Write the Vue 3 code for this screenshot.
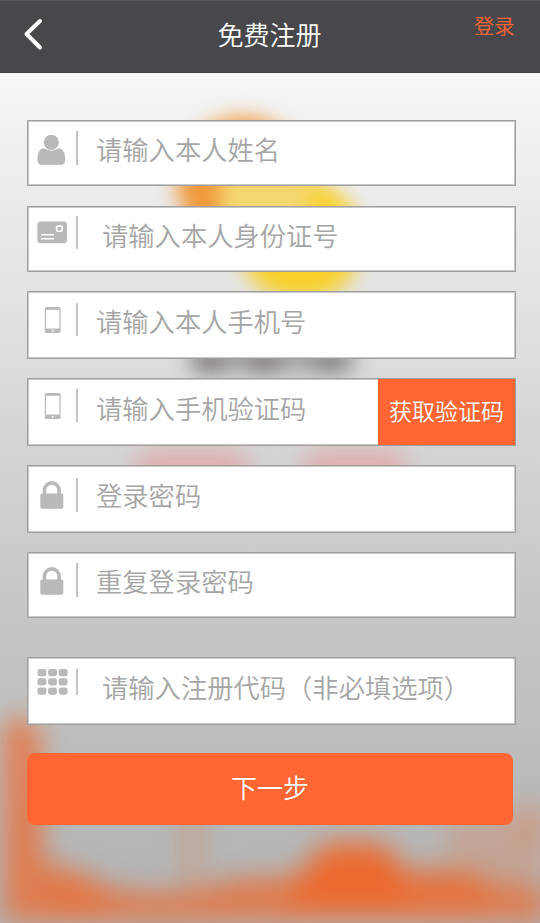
<script setup>
const fields = [
  { id: 'name', icon: 'user', hint: '请输入本人姓名' },
  { id: 'identity', icon: 'card', hint: '请输入本人身份证号' },
  { id: 'mobile', icon: 'phone', hint: '请输入本人手机号' },
  { id: 'code', icon: 'phone', hint: '请输入手机验证码', action: '获取验证码' },
  { id: 'password', icon: 'lock', hint: '登录密码' },
  { id: 'repeat', icon: 'lock', hint: '重复登录密码' },
  { id: 'invite', icon: 'grid', hint: '请输入注册代码（非必填选项）' },
]
const cells = [0, 1, 2]
</script>

<template>
  <div class="page">
    <svg class="backdrop" viewBox="0 0 540 850" aria-hidden="true">
      <defs>
        <filter id="soft" x="-30%" y="-40%" width="160%" height="180%" color-interpolation-filters="sRGB"><feGaussianBlur stdDeviation="10" /></filter>
        <filter id="softer" x="-30%" y="-60%" width="160%" height="220%" color-interpolation-filters="sRGB"><feGaussianBlur stdDeviation="13" /></filter>
      </defs>
      <g filter="url(#soft)">
        <circle cx="243" cy="110" r="66" fill="#f0993a" />
        <path d="M220 100H310Q358 125 360 160Q360 224 304 226Q246 224 241 180L220 150Z" fill="#f4d871" />
        <path d="M310 108 Q358 125 360 162 Q360 225 304 227 Q250 225 243 180 L310 165Z" fill="#f8d02b" />
      </g>
      <g filter="url(#soft)" fill="#746d6d">
        <rect x="190" y="275" width="165" height="24" opacity=".55" />
        <circle cx="210" cy="286" r="17" opacity=".6" />
        <circle cx="264" cy="286" r="18" opacity=".6" />
        <circle cx="330" cy="286" r="18" opacity=".5" />
      </g>
      <g filter="url(#softer)" fill="#e69c9c" opacity=".8">
        <rect x="138" y="380" width="108" height="32" />
        <rect x="306" y="380" width="98" height="32" />
      </g>
      <g filter="url(#softer)" fill="#f26322">
        <path d="M4 650 Q22 636 40 658 L44 790 Q75 793 104 812 Q150 825 204 815 Q245 800 278 805 L304 794 L321 770 Q354 763 388 770 L404 795 Q455 790 486 808 L546 819 V848 H4Z" opacity=".68" />
        <path d="M285 834 L320 782 Q354 772 390 784 L424 834Z" opacity=".7" />
        <rect x="183" y="725" width="18" height="85" opacity=".28" />
        <path d="M446 745 H546 V815 H450Z" opacity=".22" />
        <ellipse cx="530" cy="748" rx="20" ry="22" opacity=".18" />
        <ellipse cx="452" cy="822" rx="38" ry="18" opacity=".35" />
        <ellipse cx="75" cy="827" rx="30" ry="18" opacity=".25" />
      </g>
    </svg>

    <header class="bar">
      <svg class="back" viewBox="0 0 24 36"><path d="M18 5 4.5 18 18 31.5" /></svg>
      <h1 class="title">免费注册</h1>
      <a class="login">登录</a>
    </header>

    <form class="form">
      <div v-for="field in fields" :key="field.id" class="field" :class="field.id">
        <svg class="icon" viewBox="0 0 48 50" aria-hidden="true">
          <g v-if="field.icon === 'user'">
            <path d="M15.5 27.2C11.5 27.6 9.5 32 9.5 38c0 4.2 1.5 5.8 4 5.8h19.2c3 0 4.5-1.6 4.5-5.8 0-6-2.2-10.4-6.5-10.8-4 2.4-11 2.4-15.2 0Z" />
            <circle cx="23.3" cy="21.4" r="8.3" fill="#fff" />
            <circle cx="23.3" cy="21.4" r="7.6" />
          </g>
          <g v-else-if="field.icon === 'card'">
            <rect x="9.4" y="14.5" width="29.5" height="21.8" rx="3" />
            <path class="cut" d="M13 27.7h13M13 31.7h13" />
            <rect class="cut" x="28.6" y="19.1" width="5.6" height="5.2" rx="1.3" />
          </g>
          <g v-else-if="field.icon === 'phone'">
            <rect x="16.8" y="15" width="15.8" height="26" rx="1.8" />
            <rect x="18" y="17.8" width="13.4" height="18.7" fill="#fff" />
            <circle cx="24.7" cy="38.7" r="1" fill="#fff" />
          </g>
          <g v-else-if="field.icon === 'lock'">
            <path class="shackle" d="M16.5 29V24.2a7.3 7.3 0 0 1 14.6 0V29" />
            <rect x="12.3" y="27.5" width="23" height="15.2" rx="1.7" />
          </g>
          <g v-else>
            <template v-for="row in cells" :key="row">
              <rect v-for="col in cells" :key="col" :x="9.5 + col * 10.6" :y="11 + row * 9.2" width="8.9" height="7.3" rx="2.4" />
            </template>
          </g>
        </svg>
        <span class="divider"></span>
        <span class="hint">{{ field.hint }}</span>
        <button v-if="field.action" type="button" class="send">{{ field.action }}</button>
      </div>
      <button type="button" class="next">下一步</button>
    </form>
  </div>
</template>

<style>
body { margin: 0; }
</style>

<style scoped>
.page {
  position: relative;
  width: 540px;
  height: 923px;
  overflow: hidden;
  background: linear-gradient(#f6f6f6 73px, #f1f1f1 130px, #e4e4e4 280px, #d3d3d3 460px, #c3c3c3 650px, #b7b7b7 830px, #b3b3b3);
  font-family: "Noto Sans CJK SC", sans-serif;
  font-weight: 350;
}
.backdrop {
  position: absolute;
  left: 0;
  top: 73px;
  width: 540px;
  height: 850px;
}
.bar {
  position: relative;
  box-sizing: border-box;
  display: grid;
  grid-template-columns: 80px 1fr 80px;
  height: 73px;
  background: #48474b;
  border-top: 1px solid #565559;
  border-bottom: 1px solid #3e3d40;
}
.back {
  width: 24px;
  height: 36px;
  margin: 15px 0 0 22px;
  fill: none;
  stroke: #fff;
  stroke-width: 4;
  stroke-linecap: round;
  stroke-linejoin: round;
}
.title {
  margin: 14px 1px 0 0;
  text-align: center;
  font-size: 26px;
  line-height: 38px;
  font-weight: 350;
  color: #fff;
}
.login {
  margin: 10px 0 0 14px;
  font-size: 20.2px;
  line-height: 30px;
  color: #ff6633;
}
.form {
  position: relative;
  display: flex;
  flex-direction: column;
  padding: 47px 24px 0 27px;
}
.field {
  box-sizing: border-box;
  display: flex;
  align-items: flex-start;
  height: 66px;
  margin-bottom: 20px;
  background: #fff;
  border: 1px solid #a0a0a0;
  box-shadow: inset 0 0 0 1px #c8c8c8;
}
.icon {
  flex: none;
  width: 48px;
  height: 50px;
  fill: #b9b9b9;
}
.cut {
  fill: none;
  stroke: #fff;
  stroke-width: 1.6;
}
.shackle {
  fill: none;
  stroke: #b9b9b9;
  stroke-width: 3.6;
}
.divider {
  flex: none;
  width: 2px;
  height: 33px;
  margin-top: 10px;
  background: #c4c4c4;
}
.hint {
  flex: 1;
  padding: 9px 0 0 18px;
  font-size: 26.3px;
  line-height: 38px;
  white-space: nowrap;
  color: #a5a5a5;
}
.name .divider { height: 34px; }
.identity { margin-bottom: 19px; }
.identity .divider { margin-top: 9px; }
.identity .hint { padding-left: 24px; }
.mobile,
.code,
.password {
  height: 68px;
  margin-bottom: 19px;
}
.mobile .divider { margin-top: 11px; }
.mobile .hint,
.code .hint,
.password .hint { padding-top: 10px; }
.code .icon { margin-top: -1px; }
.password .divider { height: 34px; margin-top: 12px; }
.repeat { margin-bottom: 39px; }
.repeat .icon { margin-top: -1px; }
.repeat .divider { height: 34px; }
.invite { height: 68px; margin-bottom: 28px; }
.invite .divider { height: 26px; margin-top: 11px; }
.invite .hint { padding: 10px 0 0 24px; }
.send,
.next {
  border: 0;
  background: #ff6633;
  color: #fff;
  font-family: inherit;
  font-weight: 350;
}
.send {
  width: 137px;
  height: 66px;
  padding: 0 0 4px;
  font-size: 23px;
  white-space: nowrap;
}
.next {
  width: 486px;
  height: 72px;
  padding: 0 0 6px;
  border-radius: 8px;
  font-size: 26px;
}
</style>
